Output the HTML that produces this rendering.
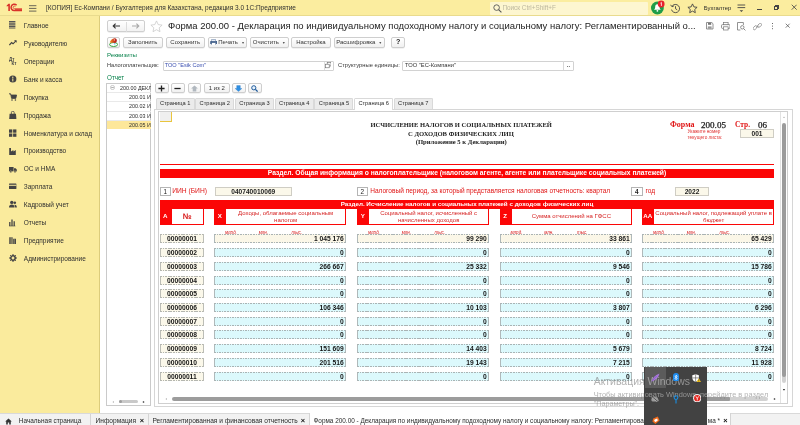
<!DOCTYPE html>
<html><head><meta charset="utf-8"><title>1C</title>
<style>
*{box-sizing:border-box;margin:0;padding:0}
html,body{width:800px;height:425px;overflow:hidden;background:#fff;font-family:"Liberation Sans",sans-serif;}
body{position:relative;will-change:transform}
.a{position:absolute;white-space:nowrap}
#titlebar{left:0;top:0;width:800px;height:15.6px;background:#fbed9f;border-bottom:1px solid #e9db8e}
#sidebar{left:0;top:15.6px;width:100px;height:397.2px;background:#faeb9d;border-right:1px solid #dccc7c}
.btn{border:1px solid #cecece;border-radius:2px;background:linear-gradient(#ffffff,#f1f1f1);font-size:6px;color:#353535;text-align:center;line-height:8.5px;height:10.5px;top:37.2px;box-shadow:0 0.5px 0.5px rgba(0,0,0,.10)}
.tab{top:97.5px;height:11px;width:39.2px;border:1px solid #d9d9d9;border-bottom:none;background:#ebebeb;font-size:5.68px;line-height:9.5px;text-align:center;color:#2c2c2c;border-radius:1.5px 1.5px 0 0}
.tab.act{background:#fff;height:12px}
.red{background:#fb0606}
.cell{height:9px;font-size:6.7px;font-weight:bold;color:#141414;line-height:9px}
.code{left:160px;width:44px;background-color:#fbf8ea;background-image:repeating-linear-gradient(90deg,#b4b6b0 0,#b4b6b0 1.7px,rgba(0,0,0,0) 1.7px,rgba(0,0,0,0) 2.6px),repeating-linear-gradient(90deg,#b4b6b0 0,#b4b6b0 1.7px,rgba(0,0,0,0) 1.7px,rgba(0,0,0,0) 2.6px),linear-gradient(#bcbdb6,#bcbdb6),linear-gradient(#bcbdb6,#bcbdb6);background-size:100% 1px,100% 1px,1px 100%,1px 100%;background-position:0 0,0 100%,0 0,100% 0;background-repeat:no-repeat;text-align:center}
.v{background-color:#dcf9fc;background-image:repeating-linear-gradient(90deg,#aab3b4 0,#aab3b4 1.7px,rgba(0,0,0,0) 1.7px,rgba(0,0,0,0) 2.6px),repeating-linear-gradient(90deg,#aab3b4 0,#aab3b4 1.7px,rgba(0,0,0,0) 1.7px,rgba(0,0,0,0) 2.6px),linear-gradient(#b0b9ba,#b0b9ba),linear-gradient(#b0b9ba,#b0b9ba);background-size:100% 1px,100% 1px,1px 100%,1px 100%;background-position:0 0,0 100%,0 0,100% 0;background-repeat:no-repeat;text-align:right;padding-right:2.3px}
.v.f{background-color:#fbf7e8}
.hw{background:#fff;border:1px solid #fb0606;color:#d62222;font-size:6px;text-align:center;line-height:6.6px;white-space:normal;top:208px;height:16.5px}
.hr{top:208px;height:16.5px;color:#fff;font-size:6.2px;font-weight:bold;text-align:center;line-height:16.5px}
.u{font-size:4.25px;color:#e03030;font-style:italic}
.ib{background:#fbf8ea;border:1px solid #cfcdc4;font-size:6.6px;font-weight:bold;color:#222;text-align:center;line-height:7px;height:9px;top:186.5px}
.nb{background:#fff;border:1px solid #b5b5b5;font-size:6.4px;color:#222;text-align:center;line-height:7px;height:9px;top:186.5px}
</style></head><body>
<div class="a" id="titlebar"></div>
<svg class="a" style="left:6px;top:3px" width="17" height="9" viewBox="0 0 17 9"><path d="M0.7 2.5L2.5 0.8H3.9V7.9H2.3V2.9L0.7 3.6z" fill="#d9322a"/><path d="M10.6 2.2A3.2 3.2 0 1 0 8.4 7.6H16" fill="none" stroke="#d9322a" stroke-width="1.5"/><path d="M9.4 3.5A1.3 1.3 0 1 0 8.6 5.7H16" fill="none" stroke="#d9322a" stroke-width="0.8"/><rect x="9" y="6.2" width="7" height="1.7" fill="#d9322a"/></svg>
<svg class="a" style="left:29px;top:4.5px" width="8" height="7" viewBox="0 0 8 7"><path d="M0 0.7H7.4M0 3.4H7.4M0 6.1H7.4" stroke="#444" stroke-width="0.8"/></svg>
<div class="a " style="left:46px;top:3.10px;line-height:10px;font-size:6.49px;color:#2f2f2f;">[КОПИЯ] Ес-Компани / Бухгалтерия для Казахстана, редакция 3.0 1С:Предприятие</div>
<div class="a" style="left:490px;top:1.5px;width:158px;height:13px;background:#fdf6d0;border-radius:1px"></div>
<svg class="a" style="left:493px;top:3.5px" width="9" height="9" viewBox="0 0 9 9"><circle cx="3.6" cy="3.6" r="2.8" fill="none" stroke="#555" stroke-width="0.9"/><path d="M5.6 5.6L8.4 8.4" stroke="#555" stroke-width="1.1"/></svg>
<div class="a " style="left:502.4px;top:3.10px;line-height:10px;font-size:6.39px;color:#bdb79e;">Поиск Ctrl+Shift+F</div>
<svg class="a" style="left:650.2px;top:0.3px" width="17" height="15" viewBox="0 0 17 15"><circle cx="7.4" cy="8" r="6.4" fill="#1f9d49"/><path d="M7.4 4.2c-1.6 0-2.2 1.4-2.2 2.8 0 1.4-.6 2.2-1.2 2.8h6.8c-.6-.6-1.2-1.4-1.2-2.8 0-1.4-.6-2.8-2.2-2.8z" fill="#fff"/><circle cx="7.4" cy="10.8" r="0.9" fill="#fff"/><circle cx="11.2" cy="4" r="3.4" fill="#e8212b"/><path d="M10.5 3.1l.9-.7v3.5" stroke="#fff" stroke-width="0.8" fill="none"/></svg>
<svg class="a" style="left:670px;top:2.5px" width="11" height="11" viewBox="0 0 11 11"><path d="M2.1 3.2A4.1 4.1 0 1 1 1.5 6.6" fill="none" stroke="#444" stroke-width="0.9"/><path d="M0.6 1.8L2 3.8L4 2.8" fill="none" stroke="#444" stroke-width="0.9"/><path d="M5.5 3.2V5.7L7.2 6.8" fill="none" stroke="#444" stroke-width="0.9"/></svg>
<svg class="a" style="left:687px;top:2.5px" width="11" height="11" viewBox="0 0 11 11"><path d="M5.5 0.9l1.4 3 3.2.4-2.4 2.2.6 3.2-2.8-1.6-2.8 1.6.6-3.2L0.9 4.3l3.2-.4z" fill="none" stroke="#444" stroke-width="0.9" stroke-linejoin="round"/></svg>
<div class="a " style="left:703.8px;top:3.10px;line-height:10px;font-size:5.9px;color:#2a2a2a;">Бухгалтер</div>
<svg class="a" style="left:737px;top:4px" width="9" height="9" viewBox="0 0 9 9"><path d="M0.5 1H8.2M0.5 3.6H8.2" stroke="#444" stroke-width="0.9"/><path d="M2.6 6.2h3.6L4.4 8z" fill="#444"/></svg>
<div class="a" style="left:757px;top:9.2px;width:4.5px;height:1px;background:#444"></div>
<div class="a" style="left:773.8px;top:6px;width:4.3px;height:4.3px;border:0.9px solid #444"></div><div class="a" style="left:775.2px;top:4.9px;width:4px;height:0.9px;background:#444"></div><div class="a" style="left:778.4px;top:4.9px;width:0.9px;height:4px;background:#444"></div>
<svg class="a" style="left:791px;top:4.3px" width="6.4" height="6.4" viewBox="0 0 7 7"><path d="M0.8 0.8L6.2 6.2M6.2 0.8L0.8 6.2" stroke="#444" stroke-width="0.9"/></svg>
<div class="a" id="sidebar"></div>
<svg class="a" style="left:9px;top:20.9px" width="8" height="8.5" viewBox="0 0 8 8.5"><path d="M0 0.6H6.4M0 2.2H6.4M0 3.8H6.4M0 5.4H6.4M0 7H6.4" stroke="#555" stroke-width="1.1"/></svg>
<div class="a " style="left:23.8px;top:20.80px;line-height:10px;font-size:6.5px;color:#2f2f2f;">Главное</div>
<svg class="a" style="left:9px;top:38.8px" width="8" height="8.5" viewBox="0 0 8 8.5"><path d="M0.4 6L2.6 3.6L4 4.8L7 1.8" fill="none" stroke="#444" stroke-width="1.2"/><path d="M5 1.2H7.6V3.8z" fill="#444"/></svg>
<div class="a " style="left:23.8px;top:38.75px;line-height:10px;font-size:6.5px;color:#2f2f2f;">Руководителю</div>
<svg class="a" style="left:9px;top:56.8px" width="8" height="8.5" viewBox="0 0 8 8.5"><text x="0" y="4" font-size="4.5" font-family="Liberation Sans" font-weight="bold" fill="#444">Дт</text><text x="2.6" y="8" font-size="4.5" font-family="Liberation Sans" font-weight="bold" fill="#444">Кт</text></svg>
<div class="a " style="left:23.8px;top:56.70px;line-height:10px;font-size:6.5px;color:#2f2f2f;">Операции</div>
<svg class="a" style="left:9px;top:74.7px" width="8" height="8.5" viewBox="0 0 8 8.5"><circle cx="3.8" cy="4" r="3.6" fill="#444"/><rect x="3.3" y="3.4" width="1" height="3" fill="#faeb9d"/><circle cx="3.8" cy="2.2" r="0.7" fill="#faeb9d"/></svg>
<div class="a " style="left:23.8px;top:74.65px;line-height:10px;font-size:6.5px;color:#2f2f2f;">Банк и касса</div>
<svg class="a" style="left:9px;top:92.7px" width="8" height="8.5" viewBox="0 0 8 8.5"><path d="M0 0.8H1.6L2.6 5.4H6.8L7.6 2H2" fill="#444" stroke="#444" stroke-width="0.8" stroke-linejoin="round"/><circle cx="3" cy="7" r="0.8" fill="#444"/><circle cx="6.4" cy="7" r="0.8" fill="#444"/></svg>
<div class="a " style="left:23.8px;top:92.60px;line-height:10px;font-size:6.5px;color:#2f2f2f;">Покупка</div>
<svg class="a" style="left:9px;top:110.6px" width="8" height="8.5" viewBox="0 0 8 8.5"><path d="M0.6 2.8H7L7.4 8H0.2z" fill="#444"/><path d="M2.4 3V1.6A1.4 1.4 0 0 1 5.2 1.6V3" fill="none" stroke="#444" stroke-width="0.8"/></svg>
<div class="a " style="left:23.8px;top:110.55px;line-height:10px;font-size:6.5px;color:#2f2f2f;">Продажа</div>
<svg class="a" style="left:9px;top:128.6px" width="8" height="8.5" viewBox="0 0 8 8.5"><rect x="0" y="0.4" width="3.3" height="3.3" fill="#444"/><rect x="4.1" y="0.4" width="3.3" height="3.3" fill="#444"/><rect x="0" y="4.5" width="3.3" height="3.3" fill="#444"/><rect x="4.1" y="4.5" width="3.3" height="3.3" fill="#444"/></svg>
<div class="a " style="left:23.8px;top:128.50px;line-height:10px;font-size:6.5px;color:#2f2f2f;">Номенклатура и склад</div>
<svg class="a" style="left:9px;top:146.6px" width="8" height="8.5" viewBox="0 0 8 8.5"><path d="M0.2 8V1H2V4.4L4.4 3V4.4L6.8 3V8z" fill="#444"/></svg>
<div class="a " style="left:23.8px;top:146.45px;line-height:10px;font-size:6.5px;color:#2f2f2f;">Производство</div>
<svg class="a" style="left:9px;top:164.5px" width="8" height="8.5" viewBox="0 0 8 8.5"><path d="M0 2H4.6V6.4H0z" fill="#444"/><path d="M5 3.2H6.6L7.8 4.6V6.4H5z" fill="#444"/><circle cx="1.8" cy="6.8" r="1" fill="#444" stroke="#faeb9d" stroke-width="0.4"/><circle cx="6" cy="6.8" r="1" fill="#444" stroke="#faeb9d" stroke-width="0.4"/></svg>
<div class="a " style="left:23.8px;top:164.40px;line-height:10px;font-size:6.5px;color:#2f2f2f;">ОС и НМА</div>
<svg class="a" style="left:9px;top:182.4px" width="8" height="8.5" viewBox="0 0 8 8.5"><rect x="0" y="1.4" width="7.4" height="5.6" rx="0.6" fill="#444"/><rect x="0" y="2.8" width="7.4" height="1" fill="#faeb9d"/></svg>
<div class="a " style="left:23.8px;top:182.35px;line-height:10px;font-size:6.5px;color:#2f2f2f;">Зарплата</div>
<svg class="a" style="left:9px;top:200.4px" width="8" height="8.5" viewBox="0 0 8 8.5"><circle cx="2.8" cy="2.4" r="1.7" fill="#444"/><path d="M0 7.6C0 5.4 1.2 4.6 2.8 4.6S5.6 5.4 5.6 7.6z" fill="#444"/><circle cx="5.8" cy="2.8" r="1.3" fill="#444"/><path d="M5.4 4.8C7 4.6 7.8 5.6 7.8 7.6H6.2z" fill="#444"/></svg>
<div class="a " style="left:23.8px;top:200.30px;line-height:10px;font-size:6.5px;color:#2f2f2f;">Кадровый учет</div>
<svg class="a" style="left:9px;top:218.3px" width="8" height="8.5" viewBox="0 0 8 8.5"><path d="M0.8 8V4M3 8V1.4M5.2 8V3.2" stroke="#444" stroke-width="1.3"/><path d="M0 8H6.4" stroke="#444" stroke-width="0.6"/></svg>
<div class="a " style="left:23.8px;top:218.25px;line-height:10px;font-size:6.5px;color:#2f2f2f;">Отчеты</div>
<svg class="a" style="left:9px;top:236.3px" width="8" height="8.5" viewBox="0 0 8 8.5"><path d="M0.2 8V1.2H3.6V8zM4.2 8V2.8H7V8z" fill="#444"/><path d="M1.3 1.2V8M2.5 1.2V8M5.6 2.8V8" stroke="#faeb9d" stroke-width="0.35"/></svg>
<div class="a " style="left:23.8px;top:236.20px;line-height:10px;font-size:6.5px;color:#2f2f2f;">Предприятие</div>
<svg class="a" style="left:9px;top:254.2px" width="8" height="8.5" viewBox="0 0 8 8.5"><circle cx="4" cy="4" r="2.3" fill="none" stroke="#444" stroke-width="1.3"/><path d="M4 0V8M0 4H8M1.2 1.2L6.8 6.8M6.8 1.2L1.2 6.8" stroke="#444" stroke-width="1"/><circle cx="4" cy="4" r="1.2" fill="#faeb9d"/></svg>
<div class="a " style="left:23.8px;top:254.15px;line-height:10px;font-size:6.5px;color:#2f2f2f;">Администрирование</div>
<div class="a" style="left:106.5px;top:20.2px;width:38.2px;height:12.2px;border:1px solid #cfcfcf;border-radius:2px;background:linear-gradient(#fff,#f2f2f2);box-shadow:0 0.5px 0.5px rgba(0,0,0,.12)"></div>
<div class="a" style="left:125.6px;top:21.5px;width:0.6px;height:10px;background:#dcdcdc"></div>
<svg class="a" style="left:112px;top:23.3px" width="9" height="6" viewBox="0 0 9 6"><path d="M8 3H1.4M3.6 0.6L1.2 3L3.6 5.4" fill="none" stroke="#333" stroke-width="1.1"/></svg>
<svg class="a" style="left:130.5px;top:23.3px" width="9" height="6" viewBox="0 0 9 6"><path d="M1 3H7.6M5.4 0.6L7.8 3L5.4 5.4" fill="none" stroke="#a8a8a8" stroke-width="1.1"/></svg>
<svg class="a" style="left:150px;top:19.8px" width="13" height="13" viewBox="0 0 13 13"><path d="M6.5 0.9l1.7 3.7 3.9.5-2.9 2.7.8 3.9-3.5-2-3.5 2 .8-3.9L0.9 5.1l3.9-.5z" fill="#fff" stroke="#c4c4c4" stroke-width="0.7" stroke-linejoin="round"/></svg>
<div class="a " style="left:168px;top:21.20px;line-height:10px;font-size:9.47px;color:#222;">Форма 200.00 - Декларация по индивидуальному подоходному налогу и социальному налогу: Регламентированный о...</div>
<svg class="a" style="left:706.3px;top:22.2px" width="7.5" height="7.5" viewBox="0 0 7.5 7.5"><path d="M0.5 0.5H5.8L7 1.7V7H0.5z" fill="none" stroke="#777" stroke-width="0.8"/><rect x="2" y="0.8" width="3.2" height="2" fill="#777"/><rect x="1.8" y="4.4" width="3.8" height="2.4" fill="#999"/></svg>
<svg class="a" style="left:720.5px;top:22px" width="9.5" height="8.5" viewBox="0 0 9.5 8.5"><rect x="0.5" y="2.6" width="8.5" height="3.8" rx="1" fill="none" stroke="#777" stroke-width="0.8"/><rect x="2.4" y="0.5" width="4.7" height="2.2" fill="#fff" stroke="#777" stroke-width="0.7"/><rect x="2.4" y="4.8" width="4.7" height="3.2" fill="#fff" stroke="#777" stroke-width="0.7"/></svg>
<svg class="a" style="left:737px;top:22px" width="9" height="9" viewBox="0 0 9 9"><path d="M0.5 0.5H6.4V3M0.5 0.5V8H3.4" fill="none" stroke="#777" stroke-width="0.8"/><circle cx="5.3" cy="5.3" r="1.7" fill="none" stroke="#777" stroke-width="0.8"/><path d="M6.6 6.6L8.4 8.4" stroke="#777" stroke-width="0.9"/></svg>
<svg class="a" style="left:752.5px;top:22.5px" width="9" height="8" viewBox="0 0 9 8"><path d="M3.6 4.6L5.4 2.8" stroke="#888" stroke-width="0.8"/><rect x="-0.2" y="3.4" width="4.6" height="2.6" rx="1.3" transform="rotate(-45 2.1 4.7)" fill="none" stroke="#888" stroke-width="0.8"/><rect x="4.3" y="1" width="4.6" height="2.6" rx="1.3" transform="rotate(-45 6.6 2.3)" fill="none" stroke="#888" stroke-width="0.8"/></svg>
<div class="a" style="left:771.6px;top:22.8px;width:1.1px;height:1.2px;background:#666;box-shadow:0 2.6px 0 #666,0 5.2px 0 #666"></div>
<svg class="a" style="left:785.2px;top:23px" width="5.6" height="5.6" viewBox="0 0 6 6"><path d="M0.8 0.8L5 5M5 0.8L0.8 5" stroke="#555" stroke-width="0.8"/></svg>
<div class="a btn" style="left:106.5px;width:13.3px"></div>
<svg class="a" style="left:108.6px;top:37.9px" width="9.2" height="9" viewBox="0 0 9.2 9"><defs><linearGradient id="g1" x1="0" x2="1" y1="0" y2="0"><stop offset="0" stop-color="#f39a2a"/><stop offset="0.5" stop-color="#d9481c"/><stop offset="1" stop-color="#a81420"/></linearGradient></defs><ellipse cx="4.6" cy="6.5" rx="4" ry="2" fill="#fff" stroke="#35a53a" stroke-width="1"/><circle cx="5.6" cy="5.7" r="0.9" fill="#7fc8e8"/><path d="M0.8 4.2C1.6 2.2 3.4 0.6 5.4 0.3C7.4 0.2 8.4 2 7.6 3.8C6.8 5.2 5 5.4 3.8 4.6C2.8 5.2 1.4 5 0.8 4.2z" fill="url(#g1)"/><circle cx="5.3" cy="1.9" r="0.55" fill="#fff"/></svg>
<div class="a btn" style="left:123px;width:39.5px">Заполнить</div>
<div class="a btn" style="left:165.5px;width:39.5px">Сохранить</div>
<div class="a btn" style="left:207.5px;width:39.5px"><svg width="7.5" height="6.5" viewBox="0 0 7.5 6.5" style="vertical-align:-1.2px;margin-right:1px"><rect x="0.2" y="2" width="7.1" height="3" rx="0.6" fill="#44628c"/><rect x="1.8" y="0.2" width="3.9" height="2" fill="#e8eef8" stroke="#44628c" stroke-width="0.4"/><rect x="1.8" y="3.8" width="3.9" height="2.5" fill="#fff" stroke="#44628c" stroke-width="0.4"/></svg>Печать <span style="font-size:3.6px;color:#555;position:relative;top:-0.5px;margin-left:1.5px">&#9660;</span></div>
<div class="a btn" style="left:250px;width:38.5px">Очистить <span style="font-size:3.6px;color:#555;position:relative;top:-0.5px;margin-left:1.5px">&#9660;</span></div>
<div class="a btn" style="left:291.2px;width:39.5px">Настройка</div>
<div class="a btn" style="left:333.7px;width:51px">Расшифровка <span style="font-size:3.6px;color:#555;position:relative;top:-0.5px;margin-left:1.5px">&#9660;</span></div>
<div class="a btn" style="left:391.2px;width:14px"><b style="font-size:7.2px;color:#222">?</b></div>
<div class="a " style="left:107px;top:50.20px;line-height:10px;font-size:6.1px;color:#06804a;">Реквизиты</div>
<div class="a " style="left:107px;top:60.20px;line-height:10px;font-size:5.68px;color:#383838;">Налогоплательщик:</div>
<div class="a" style="left:163px;top:60.5px;width:170.5px;height:10px;border:1px solid #d2d2d2;border-radius:1px;background:#fff"></div>
<div class="a " style="left:164.8px;top:60.20px;line-height:10px;font-size:5.62px;color:#3a4fb0;">ТОО "Esik Com"</div>
<div class="a" style="left:323.6px;top:61.5px;width:0.7px;height:8px;background:#dedede"></div><svg class="a" style="left:325px;top:62.4px" width="6.4" height="6.4" viewBox="0 0 6.4 6.4"><rect x="2.2" y="0.4" width="3.8" height="3.6" fill="#fff" stroke="#666" stroke-width="0.6"/><rect x="0.4" y="2.2" width="3.8" height="3.6" fill="#fff" stroke="#666" stroke-width="0.6"/></svg>
<div class="a " style="left:338px;top:60.20px;line-height:10px;font-size:5.82px;color:#383838;">Структурные единицы:</div>
<div class="a" style="left:402px;top:60.5px;width:171.5px;height:10px;border:1px solid #d2d2d2;border-radius:1px;background:#fff"></div>
<div class="a " style="left:405px;top:60.20px;line-height:10px;font-size:5.75px;color:#333;">ТОО "ЕС-Компани"</div>
<div class="a" style="left:563px;top:61px;width:10px;height:9px;border-left:1px solid #d8d8d8;font-size:6px;font-weight:bold;color:#333;text-align:center;line-height:9px">..</div>
<div class="a " style="left:107px;top:72.90px;line-height:10px;font-size:6.3px;color:#06804a;">Отчет</div>
<div class="a" style="left:106px;top:83px;width:45px;height:322.8px;border:1px solid #cacaca;background:#fff"></div>
<div class="a" style="left:106.5px;top:120.3px;width:44px;height:8.6px;background:#fde79a"></div>
<div class="a" style="left:106.5px;top:92.0px;width:44px;height:0.6px;background:#e9e9e9"></div>
<div class="a" style="left:106.5px;top:101.2px;width:44px;height:0.6px;background:#e9e9e9"></div>
<div class="a" style="left:106.5px;top:110.5px;width:44px;height:0.6px;background:#e9e9e9"></div>
<div class="a" style="left:106.5px;top:119.8px;width:44px;height:0.6px;background:#e9e9e9"></div>
<svg class="a" style="left:109.6px;top:85.4px" width="5" height="5" viewBox="0 0 5 5"><circle cx="2.5" cy="2.5" r="2.1" fill="none" stroke="#999" stroke-width="0.5"/><path d="M1.2 2.5H3.8" stroke="#777" stroke-width="0.6"/></svg>
<div class="a " style="left:119.5px;top:83.00px;line-height:10px;font-size:6.1px;color:#2e2e2e;width:31.5px;overflow:hidden"><span style="display:inline-block;transform:scaleX(.88);transform-origin:0 50%">200.00 ДЕКЛ</span></div>
<div class="a " style="left:128.8px;top:92.17px;line-height:10px;font-size:6.1px;color:#2e2e2e;width:22.19999999999999px;overflow:hidden"><span style="display:inline-block;transform:scaleX(.88);transform-origin:0 50%">200.01 И</span></div>
<div class="a " style="left:128.8px;top:101.34px;line-height:10px;font-size:6.1px;color:#2e2e2e;width:22.19999999999999px;overflow:hidden"><span style="display:inline-block;transform:scaleX(.88);transform-origin:0 50%">200.02 И</span></div>
<div class="a " style="left:128.8px;top:110.51px;line-height:10px;font-size:6.1px;color:#2e2e2e;width:22.19999999999999px;overflow:hidden"><span style="display:inline-block;transform:scaleX(.88);transform-origin:0 50%">200.03 И</span></div>
<div class="a " style="left:128.8px;top:119.68px;line-height:10px;font-size:6.1px;color:#2e2e2e;width:22.19999999999999px;overflow:hidden"><span style="display:inline-block;transform:scaleX(.88);transform-origin:0 50%">200.05 И</span></div>
<div class="a" style="left:118.7px;top:399.8px;width:19.7px;height:3.4px;border-radius:1.7px;background:#c9c9c9"></div><div class="a" style="left:118.9px;top:399.9px;width:3.2px;height:3.2px;border-radius:1.6px;background:#9d9d9d"></div>
<svg class="a" style="left:110.7px;top:399.5px" width="4" height="4" viewBox="-2 -2 4 4"><path d="M1.0 -1.0L-0.6 0L1.0 1.0z" fill="#b5b5b5"/></svg><svg class="a" style="left:142.4px;top:399.5px" width="4" height="4" viewBox="-2 -2 4 4"><path d="M-1.1 -1.1L0.66 0L-1.1 1.1z" fill="#222"/></svg>
<div class="a btn" style="left:155px;top:83.1px;width:13.5px;height:10.4px;line-height:8.4px"><svg width="7" height="7" viewBox="0 0 7 7" style="margin-top:0.6px"><path d="M3.5 0.4V6.6M0.4 3.5H6.6" stroke="#222" stroke-width="1.3"/></svg></div>
<div class="a btn" style="left:171px;top:83.1px;width:13.5px;height:10.4px;line-height:8.4px"><svg width="7" height="7" viewBox="0 0 7 7" style="margin-top:0.6px"><path d="M0.4 3.5H6.6" stroke="#222" stroke-width="1.3"/></svg></div>
<div class="a btn" style="left:187.5px;top:83.1px;width:13.5px;height:10.4px;line-height:8.4px"><svg width="7" height="7" viewBox="0 0 7 7" style="margin-top:0.6px"><path d="M3.5 0.4L6.9 3.5H5.3V6.4H1.7V3.5H0.1z" fill="#b1b8bf"/></svg></div>
<div class="a btn" style="left:204px;top:83.1px;width:25.5px;height:10.4px;line-height:8.4px">1 из 2</div>
<div class="a btn" style="left:232px;top:83.1px;width:13.5px;height:10.4px;line-height:8.4px"><svg width="7" height="7" viewBox="0 0 7 7" style="margin-top:0.6px"><path d="M3.5 6.6L6.9 3.5H5.3V0.6H1.7V3.5H0.1z" fill="#2f8fe3" stroke="#1d6fc0" stroke-width="0.3" stroke-linejoin="round"/></svg></div>
<div class="a btn" style="left:248px;top:83.1px;width:13.5px;height:10.4px;line-height:8.4px"><svg width="7" height="7" viewBox="0 0 7 7" style="margin-top:0.6px"><circle cx="2.8" cy="2.8" r="2.1" fill="#e6f2fd" stroke="#1f5a9a" stroke-width="1"/><path d="M4.4 4.4L6.6 6.6" stroke="#1f5a9a" stroke-width="1.3"/></svg></div>
<div class="a" style="left:154.3px;top:108.5px;width:638.7px;height:298.6px;border:1px solid #d6d6d6;background:#fff"></div>
<div class="a tab" style="left:155.5px">Страница 1</div>
<div class="a tab" style="left:195.2px">Страница 2</div>
<div class="a tab" style="left:234.9px">Страница 3</div>
<div class="a tab" style="left:274.6px">Страница 4</div>
<div class="a tab" style="left:314.3px">Страница 5</div>
<div class="a tab act" style="left:354.0px">Страница 6</div>
<div class="a tab" style="left:393.7px">Страница 7</div>
<div class="a" style="left:158.4px;top:111px;width:629.9px;height:292.8px;border:1px solid #cfcfcf;background:#fff"></div><div class="a" style="left:780px;top:112px;width:0.7px;height:291px;background:#e2e2e2"></div>
<div class="a" style="left:160px;top:112px;width:12px;height:10px;background:#efefef;border-right:1px solid #e9c53e;border-bottom:1px solid #e9c53e"></div>
<div class="a " style="left:370.5px;top:119.60px;line-height:10px;font-size:6.54px;color:#222;font-family:'Liberation Serif',serif;font-weight:bold">ИСЧИСЛЕНИЕ НАЛОГОВ И СОЦИАЛЬНЫХ ПЛАТЕЖЕЙ</div>
<div class="a " style="left:408px;top:128.60px;line-height:10px;font-size:6.63px;color:#222;font-family:'Liberation Serif',serif;font-weight:bold">С ДОХОДОВ ФИЗИЧЕСКИХ ЛИЦ</div>
<div class="a " style="left:415.7px;top:137.40px;line-height:10px;font-size:6.64px;color:#222;font-family:'Liberation Serif',serif;font-weight:bold">(Приложение 5 к Декларации)</div>
<div class="a " style="left:670px;top:120.40px;line-height:10px;font-size:7.97px;color:#e01515;font-family:'Liberation Serif',serif;font-weight:bold">Форма</div>
<div class="a " style="left:701px;top:120.00px;line-height:10px;font-size:9.09px;color:#111;font-family:'Liberation Serif',serif;-webkit-text-stroke:0.25px #222">200.05</div>
<div class="a " style="left:735px;top:120.40px;line-height:10px;font-size:7.43px;color:#e01515;font-family:'Liberation Serif',serif;font-weight:bold">Стр.</div>
<div class="a " style="left:758px;top:120.00px;line-height:10px;font-size:9.0px;color:#111;font-family:'Liberation Serif',serif;-webkit-text-stroke:0.25px #222">06</div>
<div class="a " style="left:687.5px;top:127.20px;line-height:10px;font-size:4.7px;color:#e03030;">Укажите номер</div>
<div class="a " style="left:687.5px;top:133.30px;line-height:10px;font-size:4.7px;color:#e03030;">текущего листа:</div>
<div class="a ib" style="left:740px;top:128.8px;width:34px;height:8.8px">001</div>
<div class="a red" style="left:160px;top:163.6px;width:614px;height:0.8px"></div>
<div class="a red" style="left:160px;top:169.2px;width:614px;height:9px;color:#fff;font-size:6.72px;font-weight:bold;text-align:center;line-height:8.8px">Раздел. Общая информация о налогоплательщике (налоговом агенте, агенте или плательщике социальных платежей)</div>
<div class="a nb" style="left:160px;width:10.5px">1</div>
<div class="a " style="left:172.2px;top:186.20px;line-height:10px;font-size:6.7px;color:#e01515;">ИИН (БИН)</div>
<div class="a ib" style="left:214.5px;width:77.5px">040740010069</div>
<div class="a nb" style="left:356.8px;width:11.2px">2</div>
<div class="a " style="left:370.2px;top:186.20px;line-height:10px;font-size:6.56px;color:#e01515;">Налоговый период, за который представляется налоговая отчетность: квартал</div>
<div class="a nb" style="left:631px;width:11.5px;font-weight:bold">4</div>
<div class="a " style="left:645.5px;top:186.20px;line-height:10px;font-size:6.56px;color:#e01515;">год</div>
<div class="a ib" style="left:675px;width:34px">2022</div>
<div class="a red" style="left:160px;top:199.8px;width:614px;height:9.4px;color:#fff;font-size:6.26px;font-weight:bold;text-align:center;line-height:8.6px">Раздел. Исчисление налогов и социальных платежей с доходов физических лиц</div>
<div class="a red hr" style="left:160px;width:10.5px">A</div>
<div class="a hw" style="left:170.5px;width:33px;line-height:15px;font-weight:bold;font-size:8px;color:#d81818">№</div>
<div class="a red hr" style="left:214px;width:11.5px">X</div>
<div class="a hw" style="left:225.3px;width:120.7px;line-height:6.5px;padding:1.3px 0 0 0">Доходы, облагаемые социальным<br>налогом</div>
<div class="a " style="left:225px;top:227.60px;line-height:10px;font-size:4.5px;color:#d92020;font-style:italic">млрд.</div>
<div class="a " style="left:258.7px;top:227.60px;line-height:10px;font-size:4.5px;color:#d92020;font-style:italic">млн.</div>
<div class="a " style="left:291.5px;top:227.60px;line-height:10px;font-size:4.5px;color:#d92020;font-style:italic">тыс.</div>
<div class="a red hr" style="left:357px;width:11.5px">Y</div>
<div class="a hw" style="left:368.3px;width:120.7px;line-height:6.5px;padding:1.3px 0 0 0">Социальный налог, исчисленный с<br>начисленных доходов</div>
<div class="a " style="left:368px;top:227.60px;line-height:10px;font-size:4.5px;color:#d92020;font-style:italic">млрд.</div>
<div class="a " style="left:401.7px;top:227.60px;line-height:10px;font-size:4.5px;color:#d92020;font-style:italic">млн.</div>
<div class="a " style="left:434.5px;top:227.60px;line-height:10px;font-size:4.5px;color:#d92020;font-style:italic">тыс.</div>
<div class="a red hr" style="left:499.5px;width:11.5px">Z</div>
<div class="a hw" style="left:510.8px;width:121.2px;line-height:14.5px">Сумма отчислений на ГФСС</div>
<div class="a " style="left:510.5px;top:227.60px;line-height:10px;font-size:4.5px;color:#d92020;font-style:italic">млрд.</div>
<div class="a " style="left:544.2px;top:227.60px;line-height:10px;font-size:4.5px;color:#d92020;font-style:italic">млн.</div>
<div class="a " style="left:577.0px;top:227.60px;line-height:10px;font-size:4.5px;color:#d92020;font-style:italic">тыс.</div>
<div class="a red hr" style="left:642px;width:11.5px">AA</div>
<div class="a hw" style="left:653.3px;width:120.7px;line-height:6.5px;padding:1.3px 0 0 0">Социальный налог, подлежащий уплате в<br>бюджет</div>
<div class="a " style="left:653px;top:227.60px;line-height:10px;font-size:4.5px;color:#d92020;font-style:italic">млрд.</div>
<div class="a " style="left:686.7px;top:227.60px;line-height:10px;font-size:4.5px;color:#d92020;font-style:italic">млн.</div>
<div class="a " style="left:719.5px;top:227.60px;line-height:10px;font-size:4.5px;color:#d92020;font-style:italic">тыс.</div>
<div class="a cell code" style="top:234.3px">00000001</div>
<div class="a cell v f" style="left:214px;top:234.3px;width:132px">1 045 176</div>
<div class="a cell v f" style="left:357px;top:234.3px;width:132px">99 290</div>
<div class="a cell v f" style="left:499.5px;top:234.3px;width:132.5px">33 861</div>
<div class="a cell v f" style="left:642px;top:234.3px;width:132px">65 429</div>
<div class="a cell code" style="top:248.0px">00000002</div>
<div class="a cell v" style="left:214px;top:248.0px;width:132px">0</div>
<div class="a cell v" style="left:357px;top:248.0px;width:132px">0</div>
<div class="a cell v" style="left:499.5px;top:248.0px;width:132.5px">0</div>
<div class="a cell v" style="left:642px;top:248.0px;width:132px">0</div>
<div class="a cell code" style="top:261.7px">00000003</div>
<div class="a cell v" style="left:214px;top:261.7px;width:132px">266 667</div>
<div class="a cell v" style="left:357px;top:261.7px;width:132px">25 332</div>
<div class="a cell v" style="left:499.5px;top:261.7px;width:132.5px">9 546</div>
<div class="a cell v" style="left:642px;top:261.7px;width:132px">15 786</div>
<div class="a cell code" style="top:275.5px">00000004</div>
<div class="a cell v" style="left:214px;top:275.5px;width:132px">0</div>
<div class="a cell v" style="left:357px;top:275.5px;width:132px">0</div>
<div class="a cell v" style="left:499.5px;top:275.5px;width:132.5px">0</div>
<div class="a cell v" style="left:642px;top:275.5px;width:132px">0</div>
<div class="a cell code" style="top:289.2px">00000005</div>
<div class="a cell v" style="left:214px;top:289.2px;width:132px">0</div>
<div class="a cell v" style="left:357px;top:289.2px;width:132px">0</div>
<div class="a cell v" style="left:499.5px;top:289.2px;width:132.5px">0</div>
<div class="a cell v" style="left:642px;top:289.2px;width:132px">0</div>
<div class="a cell code" style="top:302.9px">00000006</div>
<div class="a cell v" style="left:214px;top:302.9px;width:132px">106 346</div>
<div class="a cell v" style="left:357px;top:302.9px;width:132px">10 103</div>
<div class="a cell v" style="left:499.5px;top:302.9px;width:132.5px">3 807</div>
<div class="a cell v" style="left:642px;top:302.9px;width:132px">6 296</div>
<div class="a cell code" style="top:316.6px">00000007</div>
<div class="a cell v" style="left:214px;top:316.6px;width:132px">0</div>
<div class="a cell v" style="left:357px;top:316.6px;width:132px">0</div>
<div class="a cell v" style="left:499.5px;top:316.6px;width:132.5px">0</div>
<div class="a cell v" style="left:642px;top:316.6px;width:132px">0</div>
<div class="a cell code" style="top:330.3px">00000008</div>
<div class="a cell v" style="left:214px;top:330.3px;width:132px">0</div>
<div class="a cell v" style="left:357px;top:330.3px;width:132px">0</div>
<div class="a cell v" style="left:499.5px;top:330.3px;width:132.5px">0</div>
<div class="a cell v" style="left:642px;top:330.3px;width:132px">0</div>
<div class="a cell code" style="top:344.1px">00000009</div>
<div class="a cell v" style="left:214px;top:344.1px;width:132px">151 609</div>
<div class="a cell v" style="left:357px;top:344.1px;width:132px">14 403</div>
<div class="a cell v" style="left:499.5px;top:344.1px;width:132.5px">5 679</div>
<div class="a cell v" style="left:642px;top:344.1px;width:132px">8 724</div>
<div class="a cell code" style="top:357.8px">00000010</div>
<div class="a cell v" style="left:214px;top:357.8px;width:132px">201 516</div>
<div class="a cell v" style="left:357px;top:357.8px;width:132px">19 143</div>
<div class="a cell v" style="left:499.5px;top:357.8px;width:132.5px">7 215</div>
<div class="a cell v" style="left:642px;top:357.8px;width:132px">11 928</div>
<div class="a cell code" style="top:371.5px">00000011</div>
<div class="a cell v" style="left:214px;top:371.5px;width:132px">0</div>
<div class="a cell v" style="left:357px;top:371.5px;width:132px">0</div>
<div class="a cell v" style="left:499.5px;top:371.5px;width:132.5px">0</div>
<div class="a cell v" style="left:642px;top:371.5px;width:132px">0</div>
<div class="a" style="left:782px;top:123px;width:4px;height:253px;border-radius:2px 2px 0 0;background:#9c9c9c"></div>
<svg class="a" style="left:782px;top:115px" width="4" height="4" viewBox="-2 -2 4 4"><path d="M-1.0 1.0L0 -0.6L1.0 1.0z" fill="#b5b5b5"/></svg><svg class="a" style="left:782px;top:387.6px" width="4" height="4" viewBox="-2 -2 4 4"><path d="M-1.1 -1.1L0 0.66L1.1 -1.1z" fill="#222"/></svg>
<div class="a" style="left:782px;top:374px;width:4px;height:9.3px;border-radius:0 0 2px 2px;background:#d2d2d2"></div><div class="a" style="left:782px;top:372px;width:4px;height:4.6px;border-radius:0 0 2px 2px;background:#9c9c9c"></div>
<div class="a" style="left:172px;top:397.2px;width:558.5px;height:4px;border-radius:2px;background:#9c9c9c"></div>
<div class="a" style="left:730px;top:397.2px;width:38px;height:4px;border-radius:0 2px 2px 0;background:#d2d2d2"></div>
<svg class="a" style="left:163.8px;top:397.2px" width="4" height="4" viewBox="-2 -2 4 4"><path d="M1.0 -1.0L-0.6 0L1.0 1.0z" fill="#b5b5b5"/></svg><svg class="a" style="left:772.5px;top:397.2px" width="4" height="4" viewBox="-2 -2 4 4"><path d="M-1.1 -1.1L0.66 0L-1.1 1.1z" fill="#222"/></svg>
<div class="a" style="left:0;top:412.6px;width:800px;height:13px;background:#f2f2f2;border-top:1px solid #d9d9d9"></div>
<div class="a" style="left:309px;top:412.6px;width:422px;height:13px;background:#fff;border-left:1px solid #d4d4d4;border-right:1px solid #d4d4d4"></div>
<svg class="a" style="left:5.3px;top:417.6px" width="7" height="7" viewBox="0 0 7 7"><path d="M3.5 0.4L0.2 3.4H1.2V6.6H2.8V4.4H4.2V6.6H5.8V3.4H6.8z" fill="#333"/></svg>
<div class="a " style="left:18.8px;top:416.20px;line-height:10px;font-size:6.46px;color:#2a2a2a;">Начальная страница</div>
<div class="a" style="left:90.3px;top:413.6px;width:0.7px;height:13px;background:#d4d4d4"></div>
<div class="a " style="left:95.5px;top:416.20px;line-height:10px;font-size:6.61px;color:#2a2a2a;">Информация</div>
<div class="a " style="left:139.8px;top:416.20px;line-height:10px;font-size:7.4px;color:#111;font-weight:bold">&#215;</div>
<div class="a" style="left:148px;top:413.6px;width:0.7px;height:13px;background:#d4d4d4"></div>
<div class="a " style="left:152.5px;top:416.20px;line-height:10px;font-size:6.59px;color:#2a2a2a;">Регламентированная и финансовая отчетность</div>
<div class="a " style="left:300.8px;top:416.20px;line-height:10px;font-size:7.4px;color:#111;font-weight:bold">&#215;</div>
<div class="a " style="left:313.5px;top:416.20px;line-height:10px;font-size:6.4px;color:#2a2a2a;width:390px;overflow:hidden">Форма 200.00 - Декларация по индивидуальному подоходному налогу и социальному налогу: Регламентированный отчет</div>
<div class="a " style="left:706px;top:416.20px;line-height:10px;font-size:6.4px;color:#2a2a2a;width:14px;text-align:right">ма *</div>
<div class="a " style="left:723.2px;top:416.20px;line-height:10px;font-size:7.4px;color:#111;font-weight:bold">&#215;</div>
<div class="a " style="left:593.7px;top:377.00px;line-height:10px;font-size:10.44px;color:rgba(125,125,125,.6);">Активация Windows</div>
<div class="a " style="left:593.7px;top:390.00px;line-height:10px;font-size:7.4px;color:rgba(125,125,125,.6);">Чтобы активировать Windows, перейдите в раздел</div>
<div class="a " style="left:593.7px;top:399.00px;line-height:10px;font-size:7.2px;color:rgba(125,125,125,.6);">"Параметры".</div>
<div class="a" style="left:644.4px;top:366.6px;width:63px;height:58.4px;background:#424242"></div>
<div class="a" style="left:644.5px;top:366.5px;width:21px;height:21.4px;background:#5b5b5b"></div>
<div class="a" style="left:644.5px;top:366.5px;width:62.5px;height:58.5px;overflow:hidden">
<div class="a " style="left:-50.799999999999955px;top:10.50px;line-height:10px;font-size:10.44px;color:rgba(205,205,205,.58);">Активация Windows</div>
<div class="a " style="left:-50.799999999999955px;top:23.50px;line-height:10px;font-size:7.4px;color:rgba(205,205,205,.58);">Чтобы активировать Windows, перейдите в раздел</div>
</div>
<svg class="a" style="left:650.5px;top:372.5px" width="9" height="9" viewBox="0 0 9 9"><path d="M0.4 8.6C1.6 5 4 2 8.4 0.4C7.8 4 5 7 0.4 8.6z" fill="#a877dc"/><path d="M0.4 8.6L5.6 3" stroke="#6a3fae" stroke-width="0.4"/></svg>
<svg class="a" style="left:672.9px;top:372.7px" width="6" height="8.8" viewBox="0 0 6 8.8"><rect x="0" y="0" width="6" height="8.8" rx="3" fill="#1f8df0"/><path d="M1.6 2.9L4.2 5.5L3 6.8V2L4.2 3.3L1.6 5.9" fill="none" stroke="#fff" stroke-width="0.65"/></svg>
<svg class="a" style="left:692.4px;top:373.6px" width="9.4" height="8.8" viewBox="0 0 9.4 8.8"><path d="M3.6 0.3L6.9 1.3V4C6.9 6 5.4 7.3 3.6 8C1.8 7.3 0.3 6 0.3 4V1.3z" fill="#fdfdfd"/><path d="M3.6 0.3V8M0.3 3.9H6.9" stroke="#444" stroke-width="0.55"/><path d="M6.8 4.2L9.2 8.4H4.4z" fill="#f7c61a"/><path d="M6.8 5.6V7.1M6.8 7.5V8" stroke="#222" stroke-width="0.5"/></svg>
<svg class="a" style="left:651px;top:395.5px" width="8.5" height="6.5" viewBox="0 0 8.5 6.5"><path d="M0.8 2.2C1.4 0.8 3 0.4 4 1.2C5.4 0.6 7.2 1.6 7 3.2C8.2 3.6 8 5.6 6.6 5.6H1.8C0.2 5.6 0 3 0.8 2.2z" fill="#9b9b9b"/><path d="M0.6 0.4L7.6 6.2" stroke="#444" stroke-width="0.9"/><path d="M0.2 0.9L7.2 6.7" stroke="#c9c9c9" stroke-width="0.5"/></svg>
<svg class="a" style="left:673px;top:394.6px" width="6" height="9" viewBox="0 0 6 9"><circle cx="3" cy="2.6" r="1.9" fill="none" stroke="#1b8fe3" stroke-width="1.1"/><path d="M3 4.6V8.6" stroke="#1b8fe3" stroke-width="1.1"/></svg>
<svg class="a" style="left:692.8px;top:394.1px" width="8.4" height="8.4" viewBox="0 0 8.4 8.4"><circle cx="4.2" cy="4.2" r="4.1" fill="#f4f4f4"/><circle cx="4.2" cy="4.2" r="3.1" fill="#e3261f"/><path d="M3 2.4L4.3 4.5V6.4M5.6 2.4L4.3 4.5" fill="none" stroke="#fff" stroke-width="0.8"/></svg>
<svg class="a" style="left:651.6px;top:415.8px" width="8" height="9.2" viewBox="0 0 8 9.2"><path d="M1.2 2.4L5.8 0.6L7.6 4.6L3.4 8L0.4 5.6z" fill="#ef6a1b"/><path d="M2.6 3.4L5.2 2.6L5.8 4.4L3.6 6L2.2 5z" fill="#fff"/></svg>
</body></html>
